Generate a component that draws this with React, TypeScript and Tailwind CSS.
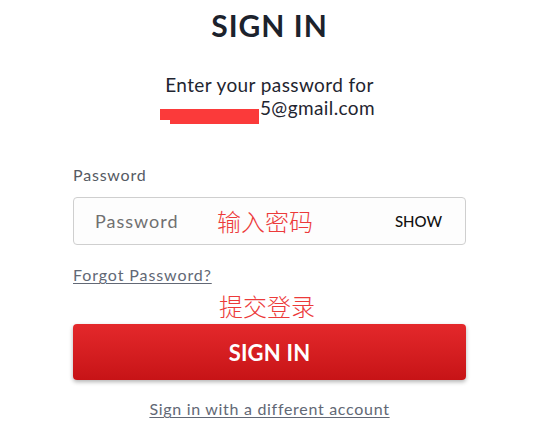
import React from "react";

export default function App() {
  return (
    <div className="w-[534px] h-[425px] bg-white overflow-hidden font-['Lato','Liberation_Sans',sans-serif]">
      <h1 className="pt-[7px] pl-[5px] text-center text-[30px] leading-[36px] font-bold tracking-[1px] text-[#1c222c]">
        SIGN IN
      </h1>
      <div className="mt-[30px] pl-[5px] text-center text-[19px] leading-[23px] tracking-[0.4px] text-[#1f2530]">
        <div>Enter your password for</div>
        <div>
          <span className="relative inline-block w-[96px] h-[23px] align-top">
            <span className="absolute left-[-4px] top-[13px] w-[99px] h-[11px] bg-[#fb3a3a]" />
            <span className="absolute left-[6px] top-[23px] w-[89px] h-[5px] bg-[#fb3a3a]" />
          </span>
          5@gmail.com
        </div>
      </div>
      <div className="ml-[73px] w-[393px]">
        <div className="mt-[46px] text-[16px] leading-[20px] tracking-[0.8px] text-[#555a63]">Password</div>
        <div className="mt-[12px] h-[48px] flex items-center border border-[#cfcfcf] rounded-[4px] bg-[#fdfdfd] pl-[21px] pr-[23px]">
          <span className="text-[18px] tracking-[1px] text-[#707070] w-[122px]">Password</span>
          <span className="text-[24px] text-[#ec3a3a] font-['Noto_Sans_CJK_SC',sans-serif] font-light leading-none">
            输入密码
          </span>
          <span className="ml-auto text-[15px] text-[#111] font-medium">SHOW</span>
        </div>
        <div className="mt-[18px]">
          <a className="text-[16px] leading-[20px] tracking-[0.9px] text-[#626875] underline underline-offset-2 decoration-1">
            Forgot Password?
          </a>
        </div>
        <div className="mt-[6px] pl-[146px] text-[24px] leading-[26px] text-[#ec3a3a] font-['Noto_Sans_CJK_SC',sans-serif] font-light">
          提交登录
        </div>
        <button className="mt-[5px] w-full h-[56px] rounded-[4px] bg-gradient-to-b from-[#e4282b] to-[#c71316] text-white text-[22px] font-bold shadow-[0_2px_4px_rgba(0,0,0,0.3)] tracking-[0.2px]">
          SIGN IN
        </button>
        <div className="mt-[17px] text-center">
          <a className="text-[16px] leading-[20px] tracking-[0.7px] text-[#626875] underline underline-offset-2 decoration-1">
            Sign in with a different account
          </a>
        </div>
      </div>
    </div>
  );
}
